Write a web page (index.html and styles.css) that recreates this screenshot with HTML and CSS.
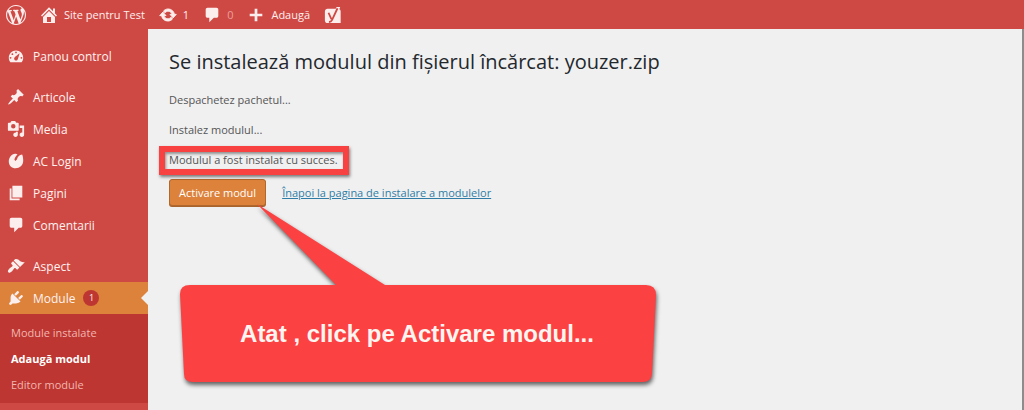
FILE: index.html
```html
<!DOCTYPE html>
<html lang="ro">
<head>
    <meta charset="UTF-8">
    <meta name="viewport" content="width=device-width, initial-scale=1.0">
    <title>Instalare modul</title>
    <link rel="stylesheet" href="styles.css">
</head>
<body>

<header class="adminbar">
    <a href="#" class="bar-item logo" aria-label="WordPress">
        <svg class="icon" viewBox="0 0 20 20"><path d="M20 10c0-5.51-4.49-10-10-10C4.48 0 0 4.49 0 10c0 5.52 4.48 10 10 10 5.51 0 10-4.48 10-10zM7.78 15.37L4.37 6.22c.55-.02 1.17-.08 1.17-.08.5-.06.44-1.13-.06-1.11 0 0-1.45.11-2.37.11-.18 0-.37 0-.58-.01C4.12 2.69 6.87 1.11 10 1.11c2.33 0 4.45.87 6.05 2.34-.68-.11-1.65.39-1.65 1.58 0 .74.45 1.36.9 2.1.35.61.55 1.36.55 2.46 0 1.49-1.4 5-1.4 5l-3.03-8.37c.54-.02.82-.17.82-.17.5-.05.44-1.25-.06-1.22 0 0-1.44.12-2.38.12-.87 0-2.33-.12-2.33-.12-.5-.03-.56 1.2-.06 1.22l.92.08 1.26 3.41zM17.41 10c.24-.64.74-1.87.43-4.25.7 1.29 1.05 2.71 1.05 4.25 0 3.29-1.73 6.24-4.4 7.78.97-2.59 1.94-5.2 2.92-7.78zM6.1 18.09C3.12 16.65 1.11 13.53 1.11 10c0-1.3.23-2.48.72-3.59C3.25 10.3 4.67 14.2 6.1 18.09zm4.03-6.63l2.58 6.98c-.86.29-1.76.45-2.71.45-.79 0-1.57-.11-2.29-.33.81-2.38 1.62-4.74 2.42-7.1z"/></svg>
    </a>
    <a href="#" class="bar-item">
        <svg class="icon" viewBox="1 1 18 18"><path fill-rule="evenodd" d="M16 8.500l2 2-1.060 1.060L10 4.600l-6.940 6.960L2 10.500l8-8.200 4 4V3.500h2v5zM10 6.040l6 5.990V18H4v-5.970zM12 17v-5H8v5h4z"/></svg>
        Site pentru Test
    </a>
    <a href="#" class="bar-item">
        <svg class="icon" viewBox="0 0 20 20"><path class="arrows" d="M10.200 3.280c3.530 0 6.430 2.610 6.920 6h2.080l-3.500 4-3.500-4h2.320c-.45-1.970-2.210-3.450-4.320-3.450-1.450 0-2.730.71-3.540 1.780L4.950 5.660C6.230 4.200 8.110 3.280 10.200 3.280zm-.4 13.440c-3.520 0-6.430-2.610-6.920-6H.8l3.500-4 3.500 4H5.480c.45 1.970 2.210 3.450 4.320 3.450 1.450 0 2.730-.71 3.540-1.780l1.710 1.950c-1.280 1.460-3.150 2.380-5.250 2.380z"/></svg>
        1
    </a>
    <a href="#" class="bar-item comments">
        <svg class="icon" viewBox="0 0 20 20"><path d="M5 2h10c1.100 0 2 .9 2 2v7c0 1.100-.9 2-2 2h-3l-5 5v-5H5c-1.100 0-2-.9-2-2V4c0-1.100.9-2 2-2z"/></svg>
        <span>0</span>
    </a>
    <a href="#" class="bar-item">
        <svg class="icon" viewBox="0 0 20 20"><path d="M17 8.500v3h-5.500v5.500h-3v-5.500H3v-3h5.500V3h3v5.500z"/></svg>
        Adaugă
    </a>
    <a href="#" class="bar-item" aria-label="Yoast SEO">
        <svg class="icon" viewBox="0 0 20 20"><path d="M4 3h9l1-2h4l-1 2.500c1 .4 1.500 1.200 1.500 2.500v13H4c-1.700 0-3-1.300-3-3V6c0-1.700 1.300-3 3-3z"/><path class="yoast-mark" d="M5 7.500l3.200 7M15 2.500L9 15.500c-.8 1.700-1.800 2.300-3.500 2.300"/></svg>
    </a>
</header>

<div class="wrap">
    <nav class="sidebar">
        <ul class="menu">
            <li><a href="#"><svg class="icon" viewBox="0 0 20 20"><path fill-rule="evenodd" d="M3.760 17.010h12.480C17.340 15.630 18 13.900 18 12c0-4.410-3.580-8-8-8s-8 3.590-8 8c0 1.900.66 3.630 1.760 5.010zM9 6a1 1 0 1 1 2 0 1 1 0 1 1-2 0zM5 8a1 1 0 1 1 2 0 1 1 0 1 1-2 0zm3.520 3.400c.84-.83 5.510-4.500 5.510-4.500s-1.660 6.680-2.490 7.510c-.84.84-2.180.84-3.020 0-.83-.83-.83-2.180 0-3.010zM3 12a1 1 0 1 1 2 0 1 1 0 1 1-2 0zm12 0a1 1 0 1 1 2 0 1 1 0 1 1-2 0z"/></svg>Panou control</a></li>
            <li class="first"><a href="#"><svg class="icon" viewBox="0 0 20 20"><path d="M10.440 3.020l1.820-1.820 6.360 6.350-1.830 1.820c-1.050-.68-2.480-.57-3.410.36l-.75.75c-.92.93-1.040 2.350-.35 3.410l-1.830 1.820-2.410-2.410-2.800 2.790c-.42.42-3.380 2.710-3.800 2.290s1.860-3.390 2.280-3.810l2.790-2.790L4.100 9.360l1.830-1.820c1.050.69 2.480.57 3.400-.36l.75-.75c.93-.92 1.050-2.350.36-3.410z"/></svg>Articole</a></li>
            <li><a href="#"><svg class="icon" viewBox="0 0 20 20"><path fill-rule="evenodd" d="M13 11V4c0-.55-.45-1-1-1h-1.670L9 1H5L3.670 3H2c-.55 0-1 .45-1 1v7c0 .55.45 1 1 1h10c.55 0 1-.45 1-1zM7 4.500a2.500 2.500 0 1 1 0 5 2.500 2.500 0 1 1 0-5zM14 6h5v10.500c0 1.380-1.120 2.500-2.500 2.500S14 17.880 14 16.500s1.120-2.500 2.500-2.500c.17 0 .34.02.5.05V9h-3V6zm-4 8.050V13h2v3.500c0 1.380-1.120 2.500-2.500 2.500S7 17.880 7 16.500 8.120 14 9.500 14c.17 0 .34.02.5.05z"/></svg>Media</a></li>
            <li><a href="#"><svg class="icon" viewBox="0 0 20 20"><path d="M9 2C5 2.500 2 6.300 2 10.500 2 15 5.300 18 9.500 18c4.700 0 8.300-3.300 8.500-8 .1-2.500-.2-5-1.200-7.300C13.800 3 11.800 5 11 8.200L9.200 10 8.200 8.400C8.800 6.200 10 4.200 11.700 2.800 11 2.200 10 1.900 9 2z"/></svg>AC Login</a></li>
            <li><a href="#"><svg class="icon" viewBox="0 0 20 20"><path d="M6 15V2h11v13H6zm-1 1h9v2H3V5h2v11z"/></svg>Pagini</a></li>
            <li><a href="#"><svg class="icon" viewBox="0 0 20 20"><path d="M5 2h10c1.100 0 2 .9 2 2v7c0 1.100-.9 2-2 2h-2l-5 5v-5H5c-1.100 0-2-.9-2-2V4c0-1.100.9-2 2-2z"/></svg>Comentarii</a></li>
            <li class="first"><a href="#"><svg class="icon" viewBox="0 0 20 20"><path d="M14.480 11.060L7.410 3.990l1.500-1.500c.5-.56 2.300-.47 3.510.32 1.210.8 1.430 1.280 2.910 2.100 1.180.64 2.450 1.260 4.450.85zm-.71.71L6.700 4.700 4.930 6.470c-.39.39-.39 1.020 0 1.410l1.060 1.060c.39.39.39 1.030 0 1.420-.6.6-1.430 1.110-2.210 1.690-.35.26-.7.53-1.010.84C1.430 14.230.4 16.080 1.400 17.070c.99 1 2.840-.03 4.180-1.360.31-.31.58-.66.85-1.020.57-.78 1.080-1.610 1.690-2.210.39-.39 1.020-.39 1.410 0l1.060 1.060c.39.39 1.020.39 1.410 0z"/></svg>Aspect</a></li>
            <li class="current"><a href="#"><svg class="icon" viewBox="0 0 20 20"><path d="M13.110 4.360L9.870 7.600 8 5.730l3.240-3.240c.35-.34 1.050-.2 1.560.32.52.51.66 1.210.31 1.550zm-8 1.770l.91-1.120 9.010 9.010-1.190.84c-.71.71-2.630 1.160-3.820 1.160H6.140L4.900 17.260c-.59.59-1.540.59-2.120 0-.59-.58-.59-1.530 0-2.120l1.240-1.240v-3.880c0-1.130.4-3.190 1.090-3.890zm7.260 3.970l3.240-3.240c.34-.35 1.040-.21 1.550.31.52.51.66 1.210.31 1.550l-3.240 3.250z"/></svg>Module <span class="count">1</span></a></li>
        </ul>
        <ul class="submenu">
            <li><a href="#">Module instalate</a></li>
            <li><a href="#" class="active">Adaugă modul</a></li>
            <li><a href="#">Editor module</a></li>
        </ul>
    </nav>

    <main class="content">
        <h1>Se instalează modulul din fișierul încărcat: youzer.zip</h1>
        <p>Despachetez pachetul...</p>
        <p>Instalez modulul...</p>
        <p><span class="success">Modulul a fost instalat cu succes.</span></p>
        <div class="actions">
            <button type="button">Activare modul</button>
            <a href="#">Înapoi la pagina de instalare a modulelor</a>
        </div>

        <div class="callout">
            <svg class="bubble" viewBox="0 0 510 200"><path d="M97 4L225 85H486Q496 85 496 95L492 174Q491 182 483 182H33Q24 182 24 174L20 94Q20 85 30 85H176z"/></svg>
            <strong>Atat , click pe Activare modul...</strong>
        </div>
    </main>
</div>

</body>
</html>
```
FILE: styles.css
```css
* {
    box-sizing: border-box;
}
body {
    margin: 0;
    min-height: 100vh;
    display: flex;
    flex-direction: column;
    font-family: "Open Sans", "Noto Sans", sans-serif;
    font-size: 11px;
    color: #555;
    background: #f0f0f0;
}
ul {
    list-style: none;
    margin: 0;
    padding: 0;
}
.icon {
    width: 18px;
    height: 18px;
    fill: #fdeeee;
    flex: none;
}

/* top bar */
.adminbar {
    display: flex;
    align-items: center;
    gap: 14px;
    height: 29px;
    padding: 0 6px;
    background: #cf4944;
}
.bar-item {
    display: flex;
    align-items: center;
    gap: 6px;
    color: #fdeeee;
    text-decoration: none;
}
.logo .icon {
    width: 20px;
    height: 20px;
}
.comments span {
    color: #ea9f9c;
}
.arrows {
    stroke: #fdeeee;
    stroke-width: 1;
}
.yoast-mark {
    fill: none;
    stroke: #cf4944;
    stroke-width: 2;
}

/* side menu */
.wrap {
    flex: 1;
    display: flex;
}
.sidebar {
    width: 148px;
    flex: none;
    padding-top: 11px;
    background: #cf4944;
}
.menu a {
    display: flex;
    align-items: center;
    gap: 8px;
    height: 32px;
    padding-left: 7px;
    font-size: 12px;
    color: #fdf1f0;
    text-decoration: none;
}
.menu .first {
    margin-top: 9px;
}
.menu .current {
    position: relative;
    background: #dd823b;
}
.current::after {
    content: "";
    position: absolute;
    right: 0;
    top: 9px;
    border: 7px solid transparent;
    border-left: 0;
    border-right-color: #f0f0f0;
}
.count {
    width: 16px;
    height: 16px;
    border-radius: 8px;
    background: #be3631;
    font-size: 9px;
    line-height: 16px;
    text-align: center;
}
.submenu {
    padding: 6px 11px 5px;
    background: #be3631;
}
.submenu a {
    display: block;
    line-height: 26px;
    color: #f0b5b0;
    text-decoration: none;
}
.submenu .active {
    color: #fff;
    font-weight: bold;
}

/* page */
.content {
    position: relative;
    flex: 1;
    padding: 18px 21px;
    border-right: 2px solid #8c8c8c;
}
h1 {
    margin: 0 0 15px;
    font-size: 20px;
    font-weight: normal;
    line-height: 29px;
    color: #23282d;
}
p {
    margin: 0 0 12px;
    line-height: 18px;
}
.success {
    position: relative;
}
.success::before {
    content: "";
    position: absolute;
    inset: -6px -11px -8px -10px;
    border: 6px solid #f84141;
    box-shadow: 1px 2px 3px rgba(0, 0, 0, 0.5), inset 1px 2px 3px rgba(0, 0, 0, 0.4);
}
.actions {
    display: flex;
    align-items: center;
    gap: 16px;
    margin-top: -2px;
}
.actions button {
    height: 27px;
    padding: 0 9px;
    border: 1px solid #b0682e;
    border-radius: 3px;
    background: #dd823b;
    box-shadow: 0 1px 0 #a8622b;
    font: inherit;
    color: #fff;
}
.actions a {
    color: #2f7da6;
}

/* speech bubble */
.callout {
    position: absolute;
    left: 12px;
    top: 171px;
    width: 510px;
    height: 200px;
    padding: 85px 0 18px 4px;
    display: flex;
    align-items: center;
    justify-content: center;
}
.bubble {
    position: absolute;
    inset: 0;
    fill: #fc4143;
    filter: drop-shadow(1px 3px 2px rgba(0, 0, 0, 0.6));
}
.callout strong {
    position: relative;
    font-family: "Liberation Sans", Arial, sans-serif;
    font-size: 24px;
    color: #fff5f0;
}
```
